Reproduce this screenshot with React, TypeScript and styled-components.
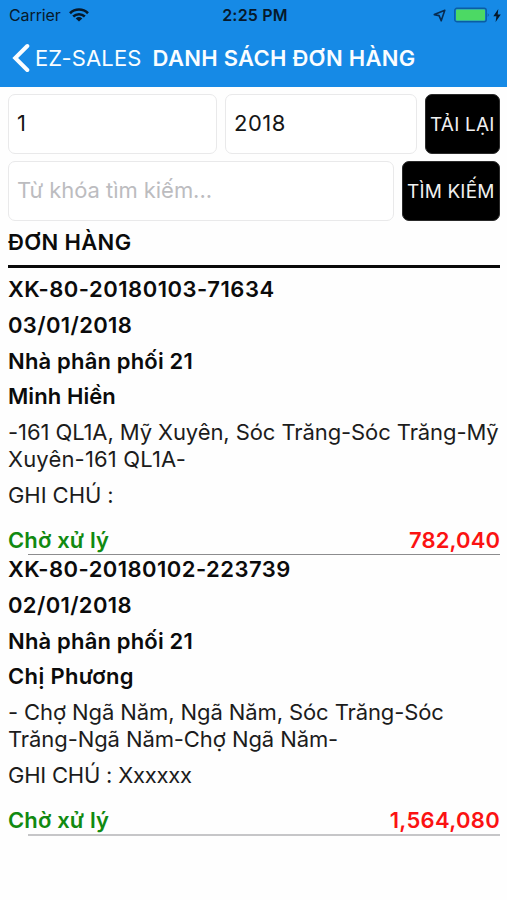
import React from 'react';
import styled, { createGlobalStyle } from 'styled-components';

const GlobalStyle = createGlobalStyle`
  * { box-sizing: border-box; }
  body {
    margin: 0;
    background: #fff;
    font-family: Inter, "Noto Sans", sans-serif;
    color: #0b0b0b;
  }
`;

const Screen = styled.div`
  width: 507px;
  height: 900px;
  overflow: hidden;
  background: #fefefe;
`;

const Header = styled.header`
  height: 87px;
  background: #168ae6;
`;

const StatusBar = styled.div`
  display: grid;
  grid-template-columns: 1fr auto 1fr;
  align-items: center;
  height: 30px;
  padding: 0 6px 0 9px;
  font-size: 16px;
  line-height: 30px;
  color: #06192b;
`;

const StatusSide = styled.div<{ $end?: boolean }>`
  display: flex;
  align-items: center;
  justify-content: ${p => (p.$end ? 'flex-end' : 'flex-start')};
  height: 29px;
`;

const Carrier = styled.span`
  margin-right: 8px;
  letter-spacing: -0.1px;
`;

const Clock = styled.span`
  font-weight: 600;
  letter-spacing: 0.2px;
`;

const NavBar = styled.nav`
  display: flex;
  align-items: center;
  height: 56px;
  padding-left: 12px;
  color: #fafdff;
  font-size: 22px;
  line-height: 56px;
`;

const BackLabel = styled.span`
  margin: 0 0 0 5px;
  letter-spacing: 0.15px;
`;

const Title = styled.h1`
  margin: 0 0 0 11px;
  font-size: 22px;
  font-weight: 600;
  letter-spacing: 0.28px;
`;

const Content = styled.main`
  padding: 7px 7px 0 8px;
`;

const FormRow = styled.div<{ $columns: string }>`
  display: grid;
  grid-template-columns: ${p => p.$columns};
  column-gap: 8px;
  height: 60px;
  margin-bottom: 7px;
`;

const Field = styled.input<{ $spacing?: number }>`
  min-width: 0;
  width: 100%;
  height: 60px;
  padding: 0 8px 3px 8px;
  border: 1.4px solid #e9e9ea;
  border-radius: 7px;
  background: #fff;
  outline: none;
  font: 400 22px Inter, "Noto Sans", sans-serif;
  letter-spacing: ${p => p.$spacing ?? 0}px;
  color: #161616;
  &::placeholder { color: #bcbcbf; opacity: 1; }
`;

const Button = styled.button<{ $spacing: number }>`
  height: 60px;
  padding: 0;
  border: 1px solid #2a2a2a;
  border-radius: 7px;
  background: #000;
  color: #f0f0f0;
  font: 400 19px Inter, "Noto Sans", sans-serif;
  letter-spacing: ${p => p.$spacing}px;
  white-space: nowrap;
`;

const SectionTitle = styled.h2`
  height: 40px;
  margin: 0;
  border-bottom: 3px solid #0a0a0a;
  padding-top: 1px;
  font-size: 22px;
  font-weight: 600;
  line-height: 27px;
  letter-spacing: 0.34px;
`;

const Order = styled.article`
  height: 280px;
`;

const OrderList = styled.section`
  padding-top: 8px;
`;

const Line = styled.div<{ $bold?: boolean; $spacing: number }>`
  margin-bottom: 8.8px;
  font-size: 22px;
  font-weight: ${p => (p.$bold ? 600 : 400)};
  line-height: 27px;
  letter-spacing: ${p => p.$spacing}px;
  white-space: pre;
  color: ${p => (p.$bold ? '#0b0b0b' : '#1c1c1c')};
`;

const AddressPart = styled.span<{ $spacing: number }>`
  display: block;
  letter-spacing: ${p => p.$spacing}px;
`;

const Summary = styled.footer`
  display: flex;
  justify-content: space-between;
  margin-top: 18px;
  font-size: 22px;
  font-weight: 600;
  line-height: 27px;
`;

const Status = styled.span`
  color: #118a11;
  letter-spacing: 0.15px;
`;

const Amount = styled.span<{ $spacing: number }>`
  color: #fb1212;
  letter-spacing: ${p => p.$spacing}px;
`;

const Divider = styled.div<{ $last?: boolean }>`
  height: ${p => (p.$last ? 2 : 1)}px;
  margin-left: 20px;
  background: ${p => (p.$last ? '#c6c6c8' : '#8c8c8e')};
`;

const WifiIcon = () => (
  <svg width="20" height="14" viewBox="0 0 20 14" fill="none" stroke="#06192b" strokeWidth="2.6">
    <path d="M1 5.2C6 0.3 14 0.3 19 5.2" />
    <path d="M4.2 8.5C7.5 5.4 12.5 5.4 15.8 8.5" />
    <path d="M10 13.6 6.7 10.4Q10 7.7 13.3 10.4Z" fill="#06192b" stroke="none" />
  </svg>
);

const LocationIcon = styled.svg`
  margin-right: 8px;
`;

const BoltIcon = styled.svg`
  margin-left: 3px;
`;

interface OrderData {
  code: [string, number];
  date: string;
  customer: [string, number];
  address: [string, number][];
  note: [string, number];
  amount: [string, number];
}

const orders: OrderData[] = [
  {
    code: ['XK-80-20180103-71634', 0.52],
    date: '03/01/2018',
    customer: ['Minh Hiền', 0.08],
    address: [['-161 QL1A, Mỹ Xuyên, Sóc Trăng-Sóc Trăng-Mỹ', -0.09], ['Xuyên-161 QL1A-', 0.17]],
    note: ['GHI CHÚ :', -0.06],
    amount: ['782,040', 0.1],
  },
  {
    code: ['XK-80-20180102-223739', 0.46],
    date: '02/01/2018',
    customer: ['Chị Phương', 0.35],
    address: [['- Chợ Ngã Năm, Ngã Năm, Sóc Trăng-Sóc', -0.1], ['Trăng-Ngã Năm-Chợ Ngã Năm-', -0.09]],
    note: ['GHI CHÚ : Xxxxxx', -0.22],
    amount: ['1,564,080', 0.32],
  },
];

export default function App() {
  return (
    <Screen>
      <GlobalStyle />
      <Header>
        <StatusBar>
          <StatusSide>
            <Carrier>Carrier</Carrier>
            <WifiIcon />
          </StatusSide>
          <Clock>2:25 PM</Clock>
          <StatusSide $end>
            <LocationIcon width="13" height="13" viewBox="0 0 13 13" fill="none" stroke="#082b50" strokeWidth="1.6" strokeLinejoin="round">
              <path d="M11.8 1.2 1.3 5.6 6.1 6.6 8.2 11.8Z" />
            </LocationIcon>
            <svg width="36" height="16" viewBox="0 0 36 16">
              <rect x="0.8" y="1.3" width="31.4" height="13.4" rx="2" fill="none" stroke="#0b5da3" strokeWidth="1.4" />
              <rect x="2" y="2.5" width="29" height="11" rx="0.8" fill="#4cd964" />
              <path d="M33.8 6Q35.6 8 33.8 10Z" fill="#0b4c86" />
            </svg>
            <BoltIcon width="8" height="13" viewBox="0 0 8 13" fill="#06192b">
              <path d="M5.3 0 0.3 7.2H3.4L2.6 13 7.8 5.4H4.7Z" />
            </BoltIcon>
          </StatusSide>
        </StatusBar>
        <NavBar>
          <svg width="18" height="30" viewBox="0 0 18 30" fill="none" stroke="#fafdff" strokeWidth="4" strokeLinecap="round">
            <path d="M15.3 3 3.2 15 15.3 27" />
          </svg>
          <BackLabel>EZ-SALES</BackLabel>
          <Title>DANH SÁCH ĐƠN HÀNG</Title>
        </NavBar>
      </Header>
      <Content>
        <FormRow $columns="209px 191.5px 1fr">
          <Field defaultValue="1" />
          <Field defaultValue="2018" $spacing={0.5} />
          <Button $spacing={0.2}>TẢI LẠI</Button>
        </FormRow>
        <FormRow $columns="385.5px 1fr">
          <Field placeholder="Từ khóa tìm kiếm..." $spacing={-0.05} />
          <Button $spacing={0.15}>TÌM KIẾM</Button>
        </FormRow>
        <SectionTitle>ĐƠN HÀNG</SectionTitle>
        <OrderList>
          {orders.map((o, i) => (
            <Order key={o.code[0]}>
              <Line $bold $spacing={o.code[1]}>{o.code[0]}</Line>
              <Line $bold $spacing={0.36}>{o.date}</Line>
              <Line $bold $spacing={0.18}>Nhà phân phối 21</Line>
              <Line $bold $spacing={o.customer[1]}>{o.customer[0]}</Line>
              <Line $spacing={0}>
                {o.address.map(([text, spacing]) => (
                  <AddressPart key={text} $spacing={spacing}>{text}</AddressPart>
                ))}
              </Line>
              <Line $spacing={o.note[1]}>{o.note[0]}</Line>
              <Summary>
                <Status>Chờ xử lý</Status>
                <Amount $spacing={o.amount[1]}>{o.amount[0]}</Amount>
              </Summary>
              <Divider $last={i === orders.length - 1} />
            </Order>
          ))}
        </OrderList>
      </Content>
    </Screen>
  );
}
